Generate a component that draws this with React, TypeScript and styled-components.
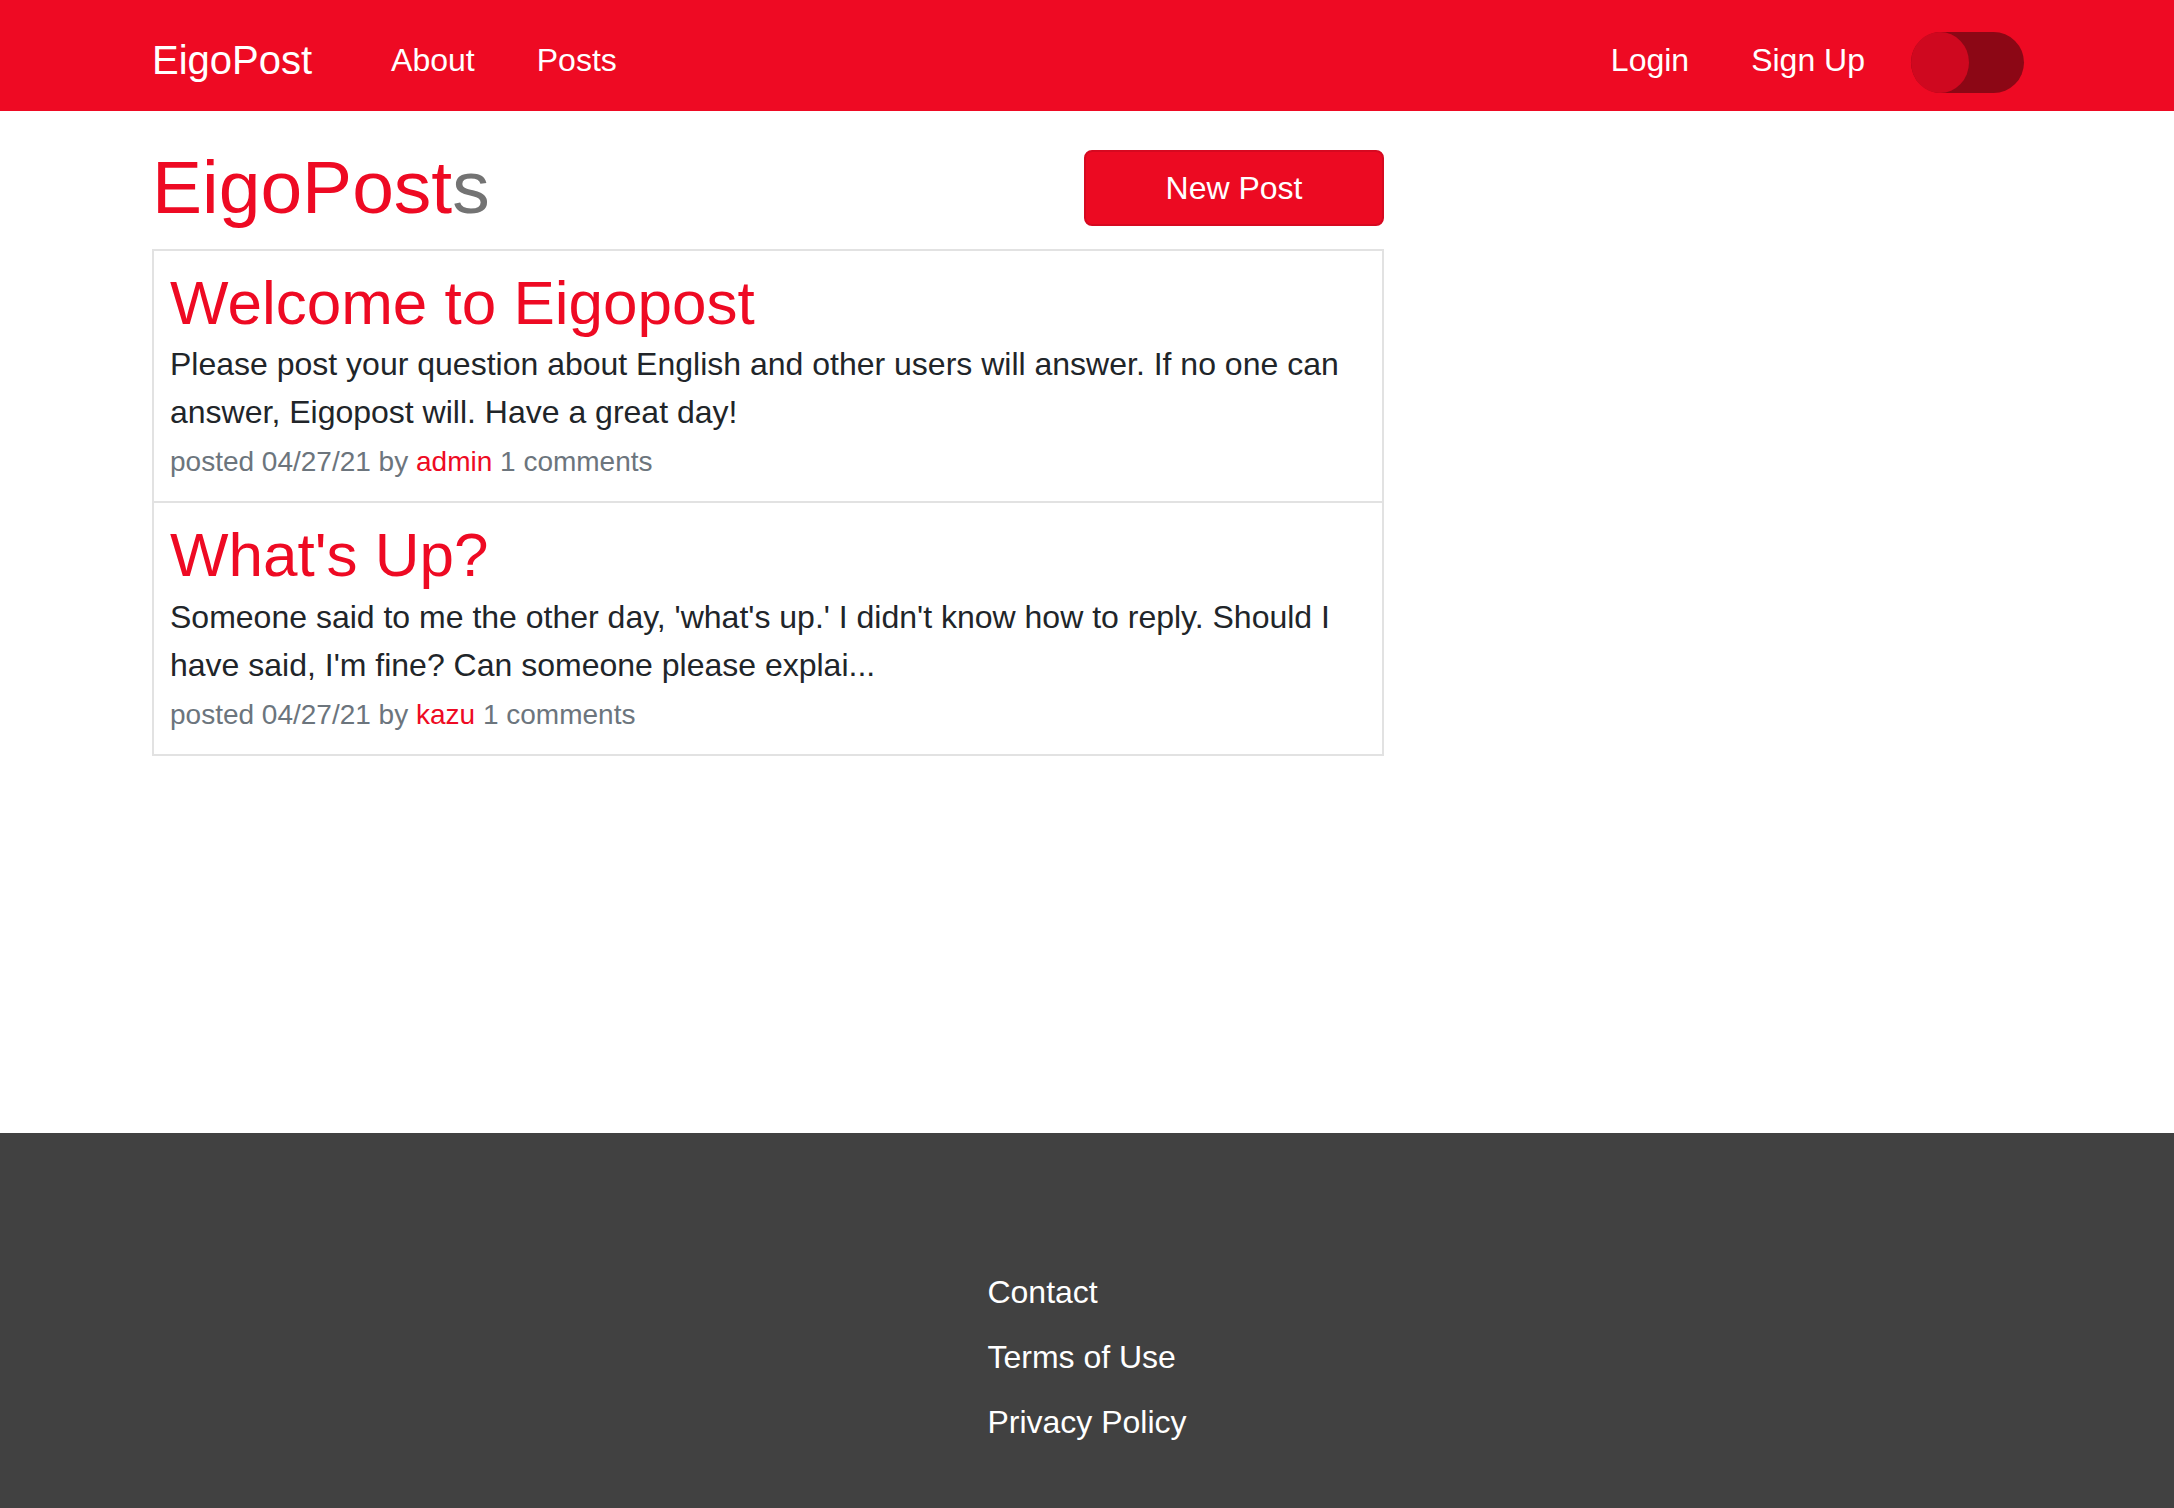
import React from 'react';
import styled, { createGlobalStyle } from 'styled-components';

const RED = '#ee0a23';

const GlobalStyle = createGlobalStyle`
  html, body {
    margin: 0;
    padding: 0;
    background: #fff;
    font-family: "Liberation Sans", Arial, Helvetica, sans-serif;
    color: #212529;
  }
  * {
    box-sizing: border-box;
  }
`;

const Page = styled.div`
  min-height: 100vh;
  display: flex;
  flex-direction: column;
`;

const Header = styled.header`
  height: 111px;
  background-color: ${RED};
  display: flex;
  align-items: center;
  padding: 8px 150px 0 152px;
`;

const Brand = styled.a`
  font-size: 40px;
  line-height: 1.2;
  color: #fff;
  margin-right: 48px;
  text-decoration: none;
`;

const NavLink = styled.a`
  font-size: 32px;
  line-height: 48px;
  color: #fff;
  padding: 0 31px;
  text-decoration: none;
`;

const Spacer = styled.div`
  flex: 1;
`;

const Toggle = styled.div`
  width: 113px;
  height: 61px;
  border-radius: 31px;
  background-color: #8c0715;
  margin-left: 15px;
  margin-top: 6px;
  display: flex;
  align-items: center;
`;

const Knob = styled.div`
  width: 58px;
  height: 61px;
  border-radius: 50%;
  background-color: #cf081f;
`;

const Main = styled.main`
  flex: 1;
  padding: 31px 0 0 152px;
`;

const Column = styled.div`
  width: 1232px;
`;

const TitleRow = styled.div`
  display: flex;
  align-items: center;
  justify-content: space-between;
  margin-bottom: 17px;
`;

const PageTitle = styled.h1`
  margin: 0;
  font-size: 75px;
  font-weight: 400;
  line-height: 1.2;
  color: ${RED};
`;

const Faded = styled.span`
  color: #737373;
`;

const Button = styled.button`
  width: 300px;
  height: 76px;
  margin-top: 2px;
  background-color: #ec0a22;
  border: 2px solid #d60920;
  border-radius: 8px;
  color: #fff;
  font-family: inherit;
  font-size: 32px;
  cursor: pointer;
`;

const Card = styled.div`
  border: 2px solid #e2e2e2;
`;

const Item = styled.div`
  padding: 15px 16px 18px;
  & + & {
    border-top: 2px solid #e2e2e2;
  }
`;

const PostTitle = styled.a`
  display: block;
  font-size: 62px;
  line-height: 1.2;
  color: ${RED};
  text-decoration: none;
`;

const Body = styled.p`
  margin: 0;
  font-size: 32px;
  line-height: 48px;
  color: #212529;
`;

const Meta = styled.div`
  margin-top: 5px;
  font-size: 28px;
  line-height: 42px;
  color: #6c757d;
`;

const Author = styled.a`
  color: ${RED};
  text-decoration: none;
`;

const Footer = styled.footer`
  background-color: #414141;
  display: flex;
  justify-content: center;
  padding: 135px 0 62px;
`;

const FooterList = styled.ul`
  list-style: none;
  margin: 0;
  padding: 0;
  display: flex;
  flex-direction: column;
  gap: 17px;
`;

const FooterLink = styled.a`
  display: block;
  font-size: 32px;
  line-height: 48px;
  color: #fff;
  text-decoration: none;
`;

const posts = [
  {
    title: 'Welcome to Eigopost',
    body: 'Please post your question about English and other users will answer. If no one can answer, Eigopost will. Have a great day!',
    date: '04/27/21',
    author: 'admin',
    comments: 1,
  },
  {
    title: "What's Up?",
    body: "Someone said to me the other day, 'what's up.' I didn't know how to reply. Should I have said, I'm fine? Can someone please explai...",
    date: '04/27/21',
    author: 'kazu',
    comments: 1,
  },
];

const App = () => (
  <Page>
    <GlobalStyle />
    <Header>
      <Brand>EigoPost</Brand>
      <NavLink>About</NavLink>
      <NavLink>Posts</NavLink>
      <Spacer />
      <NavLink>Login</NavLink>
      <NavLink>Sign Up</NavLink>
      <Toggle>
        <Knob />
      </Toggle>
    </Header>
    <Main>
      <Column>
        <TitleRow>
          <PageTitle>
            EigoPost<Faded>s</Faded>
          </PageTitle>
          <Button>New Post</Button>
        </TitleRow>
        <Card>
          {posts.map((post) => (
            <Item key={post.title}>
              <PostTitle>{post.title}</PostTitle>
              <Body>{post.body}</Body>
              <Meta>
                {`posted ${post.date} by `}
                <Author>{post.author}</Author>
                {` ${post.comments} comments`}
              </Meta>
            </Item>
          ))}
        </Card>
      </Column>
    </Main>
    <Footer>
      <FooterList>
        <li><FooterLink>Contact</FooterLink></li>
        <li><FooterLink>Terms of Use</FooterLink></li>
        <li><FooterLink>Privacy Policy</FooterLink></li>
      </FooterList>
    </Footer>
  </Page>
);

export default App;
